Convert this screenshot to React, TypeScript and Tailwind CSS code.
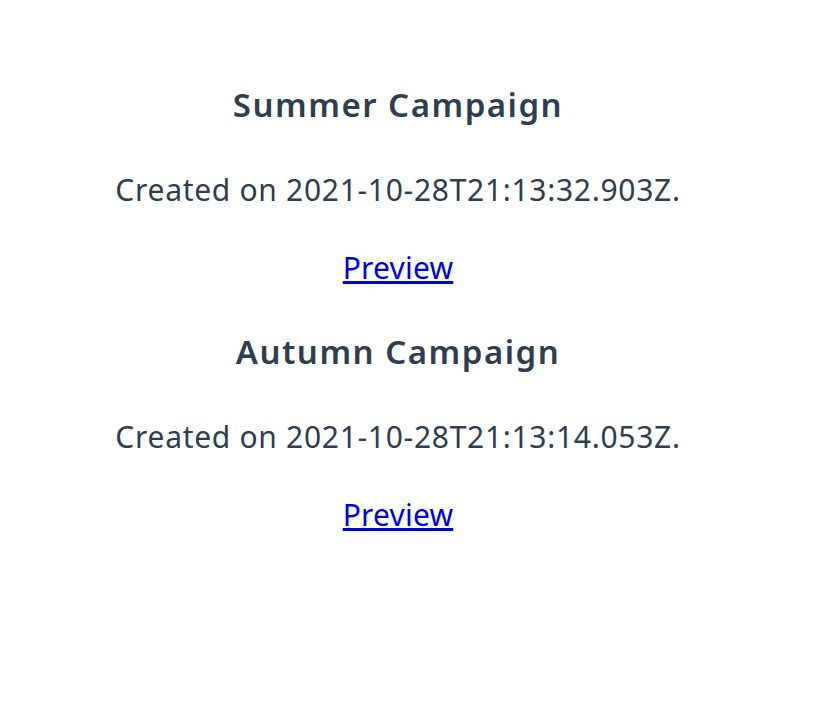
const campaigns = [
  { id: 1, name: "Summer Campaign", createdAt: "2021-10-28T21:13:32.903Z" },
  { id: 2, name: "Autumn Campaign", createdAt: "2021-10-28T21:13:14.053Z" },
];

export default function App() {
  return (
    <div className="min-h-screen bg-white font-['Noto_Sans',sans-serif] text-[#2c3e50]">
      <div className="w-[796px] pt-[85px] text-center">
        {campaigns.map((c) => (
          <div key={c.id} className="flex flex-col items-center">
            <h2 className="text-[33px] font-semibold leading-[40px] tracking-[1.5px]">{c.name}</h2>
            <p className="mt-[47px] text-[30px] leading-[36px] tracking-[0.7px]">Created on {c.createdAt}.</p>
            <a href="#" className="mt-[42px] mb-[46px] text-[30px] leading-[36px] tracking-[0.2px] text-[#0000ee] underline">
              Preview
            </a>
          </div>
        ))}
      </div>
    </div>
  );
}
